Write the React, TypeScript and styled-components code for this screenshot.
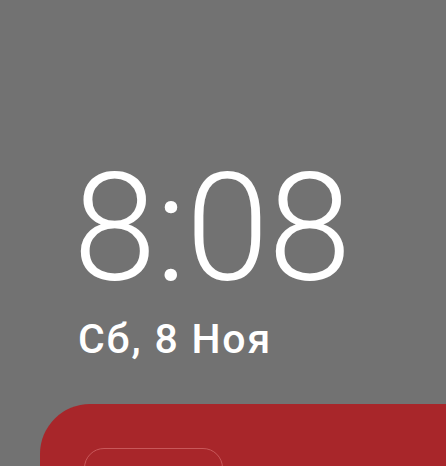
import React from 'react';
import styled, { createGlobalStyle } from 'styled-components';

const GlobalStyle = createGlobalStyle`
  html, body {
    margin: 0;
    padding: 0;
    background: #727272;
  }
  body {
    font-family: Roboto, "Noto Sans", sans-serif;
  }
`;

const Screen = styled.div`
  width: 446px;
  height: 466px;
  overflow: hidden;
  background: #727272;
  display: flex;
  flex-direction: column;
`;

const ClockBlock = styled.div`
  padding: 154px 0 0 73px;
  display: flex;
  flex-direction: column;
  color: #ffffff;
`;

const Time = styled.div`
  font-size: 150px;
  font-weight: 300;
  line-height: 1;
  letter-spacing: -1px;
`;

const DateLine = styled.div`
  margin-top: 15px;
  padding-left: 5px;
  font-size: 41px;
  font-weight: 500;
  line-height: 1;
  letter-spacing: 1.8px;
`;

const Card = styled.div`
  margin: 44px -60px 0 40px;
  flex: 1;
  background: #a8262a;
  border-radius: 50px 50px 0 0;
  padding: 44px 0 0 44px;
`;

const Slot = styled.div`
  width: 137px;
  height: 60px;
  border: 1.5px solid #c8585a;
  border-radius: 20px;
`;

export default function App() {
  return (
    <Screen>
      <GlobalStyle />
      <ClockBlock>
        <Time>8:08</Time>
        <DateLine>Сб, 8 Ноя</DateLine>
      </ClockBlock>
      <Card>
        <Slot />
      </Card>
    </Screen>
  );
}
